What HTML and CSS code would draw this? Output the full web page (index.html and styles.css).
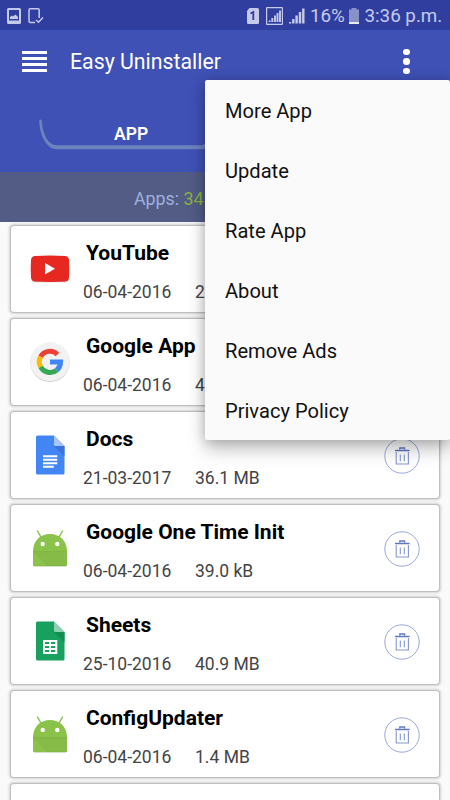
FILE: index.html
```
<!DOCTYPE html>
<html lang="en">
<head>
  <meta charset="utf-8">
  <title>Easy Uninstaller</title>
  <link rel="stylesheet" href="styles.css">
</head>
<body>
  <!-- Shared icons -->
  <svg class="icon-defs" width="0" height="0">
    <symbol id="trash" viewBox="0 0 36 36">
      <circle cx="18" cy="18" r="17.2" fill="none" stroke="#8092d0" stroke-width="0.8" />
      <path d="M11 12.5h14.600M15.800 11.500v-1.500h4.800v1.500" fill="none" stroke="#6078c0" stroke-width="1.300" />
      <path d="M12.200 14v12h12.200V14M16.300 16.500v6.800M20.300 16.500v6.800" fill="none" stroke="#8496d0" stroke-width="1.100" />
    </symbol>
    <symbol id="android" viewBox="0 0 40 40">
      <path d="M7.500 3l4 7M32.500 3l-4 7" stroke="#8bc34a" stroke-width="1.500" stroke-linecap="round" />
      <path d="M3 37V22.500C3.300 12.500 10.500 6 20 6S36.700 12.500 37 22.500V37q0 1-1 1H4q-1 0-1-1z" fill="#8bc34a" />
      <path d="M3 24l14 14H4q-1 0-1-1z" fill="#8bc34a" />
      <path d="M3 24l14 14h19q1 0 1-1V24z" fill="#86bb47" />
      <path d="M3 23.700h34" stroke="#79ad41" stroke-width="0.7" />
      <path d="M4 38.200h32" stroke="#7ba350" stroke-width="0.500" />
      <circle cx="12.700" cy="16" r="2.200" fill="#fff" />
      <circle cx="27.300" cy="16" r="2.200" fill="#fff" />
    </symbol>
  </svg>

  <div class="status-bar">
    <div class="status-left">
      <svg width="14" height="16" viewBox="0 0 14 16">
        <path d="M1.500 0h11q1.500 0 1.500 1.500v13q0 1.500-1.500 1.500h-11Q0 16 0 14.500v-13Q0 0 1.500 0zM2 2v10.500h10V2z" fill="#c5cae9" fill-rule="evenodd" />
        <path d="M3 11V9l2-1.500 1 1L8.500 6.500 11 9v2z" fill="#c5cae9" />
      </svg>
      <svg width="16" height="16" viewBox="0 0 16 16">
        <path d="M11.200 10V2q0-1.200-1.200-1.200H2.200Q1 .8 1 2v11q0 1.500 1.200 1.500H7" fill="none" stroke="#c5cae9" stroke-width="1.500" />
        <path d="M8 12l2.500 2.300L15 9.500" fill="none" stroke="#c5cae9" stroke-width="1.500" />
      </svg>
    </div>
    <div class="status-right">
      <svg class="sim" width="13" height="16" viewBox="0 0 13 16">
        <path d="M3.500 0h8Q13 0 13 1.500v13q0 1.500-1.500 1.500h-9Q1 16 1 14.500V3z" fill="#c5cae9" />
        <path d="M4.500 5.500L7.300 4v8" fill="none" stroke="#303f9f" stroke-width="1.800" />
      </svg>
      <svg class="boxed-signal" width="17" height="18" viewBox="0 0 17 18">
        <rect x="0.600" y="0.600" width="15.800" height="16.800" rx="0.500" fill="none" stroke="#c5cae9" stroke-width="1.200" />
        <path d="M3.700 15v-1.500M6.300 15v-4M9 15V8.500M11.500 15V6M14 15V3.500" stroke="#c5cae9" stroke-width="1.900" />
      </svg>
      <svg class="signal" width="16" height="16" viewBox="0 0 16 16">
        <path d="M1 15.500v-1.500M4.300 15.500v-4.500M7.600 15.500V7.500M11 15.500V4M14.300 15.500V.5" stroke="#c5cae9" stroke-width="2.400" />
      </svg>
      <span class="percent">16%</span>
      <svg class="battery" width="10" height="16" viewBox="0 0 10 16">
        <path d="M2.500 0h5v1.500H10V16H0V1.500h2.500z" fill="#8990c8" />
        <path d="M0 14h10v2H0z" fill="#e8eaf6" />
      </svg>
      <span class="clock">3:36 p.m.</span>
    </div>
  </div>

  <div class="header">
    <div class="toolbar">
      <div class="hamburger"><i></i><i></i><i></i><i></i></div>
      <h1>Easy Uninstaller</h1>
      <div class="more"><i></i><i></i><i></i></div>
    </div>
    <div class="tab">
      <svg width="185" height="34" viewBox="0 0 185 34">
        <path d="M.2 1.500Q1.500-.5 2.800 1.500C3.500 14 8.500 26.200 18 26.200h143q4 0 7-3l2 4q-3 3-8 3H18C7 30.200.5 15.500.2 1.500z" fill="#6c84be" />
      </svg>
      <span>APP</span>
    </div>
  </div>

  <div class="count-bar">Apps: <b>34</b></div>

  <div class="list">
    <div class="card">
      <svg class="app-icon" width="40" height="40" viewBox="0 0 40 40">
        <rect x="1.200" y="8" width="37.600" height="25.300" rx="4" fill="#c9c0c0" />
        <path d="M5 7q15-.8 30 0 3.700.3 4 4 .6 9 0 17.500-.3 3.500-4 4-15 .8-30 0-3.500-.4-4-4-.6-9 0-17.500Q1.400 7.300 5 7z" fill="#e62820" />
        <path d="M15 14v11.500l10-5.700z" fill="#fff" />
      </svg>
      <div class="info">
        <h2>YouTube</h2>
        <p><span>06-04-2016</span><span>2</span></p>
      </div>
      <svg class="trash"><use href="#trash" /></svg>
    </div>
    <div class="card">
      <svg class="app-icon" width="40" height="40" viewBox="0 0 40 40">
        <circle cx="20" cy="20.300" r="19.600" fill="#c8c8c8" />
        <circle cx="20" cy="19.700" r="19.500" fill="#f2f2f2" />
        <g fill="none" stroke-width="5">
          <path d="M10.600 14.800A10.600 10.600 0 0 1 27.500 12.500" stroke="#ea4335" />
          <path d="M10.600 24.900A10.600 10.600 0 0 1 10.600 14.800" stroke="#fbbc05" />
          <path d="M26.600 28.200A10.600 10.600 0 0 1 10.600 24.900" stroke="#34a853" />
          <path d="M20 20h10.600A10.600 10.600 0 0 1 26.600 28.200" stroke="#4285f4" />
        </g>
      </svg>
      <div class="info">
        <h2>Google App</h2>
        <p><span>06-04-2016</span><span>4</span></p>
      </div>
      <svg class="trash"><use href="#trash" /></svg>
    </div>
    <div class="card">
      <svg class="app-icon" width="40" height="40" viewBox="0 0 40 40">
        <path d="M7.500.5H24L34.500 11v27q0 1.500-1.500 1.500H7.500Q6 39.500 6 38V2Q6 .5 7.500.5z" fill="#4285f4" />
        <path d="M24 11h10.500v10.500z" fill="#3b74d8" />
        <path d="M24 .5L34.500 11H25.500q-1.500 0-1.500-1.500z" fill="#a6c5fa" />
        <path d="M13 21.200h14.300M13 24.700h14.300M13 28.200h14.300M13 31.800h10.800" stroke="#fff" stroke-width="1.900" />
      </svg>
      <div class="info">
        <h2>Docs</h2>
        <p><span>21-03-2017</span><span>36.1 MB</span></p>
      </div>
      <svg class="trash"><use href="#trash" /></svg>
    </div>
    <div class="card">
      <svg class="app-icon" width="40" height="40"><use href="#android" /></svg>
      <div class="info">
        <h2>Google One Time Init</h2>
        <p><span>06-04-2016</span><span>39.0 kB</span></p>
      </div>
      <svg class="trash"><use href="#trash" /></svg>
    </div>
    <div class="card">
      <svg class="app-icon" width="40" height="40" viewBox="0 0 40 40">
        <path d="M7.500.5H24L34.500 11v27q0 1.500-1.500 1.500H7.500Q6 39.500 6 38V2Q6 .5 7.500.5z" fill="#17a05e" />
        <path d="M24 11h10.500v10.500z" fill="#148d53" />
        <path d="M24 .5L34.500 11H25.500q-1.500 0-1.500-1.500z" fill="#8ed1b1" />
        <path d="M13 19h14.300v14H13zM15 21v2h4.300v-2zM21 21v2h4.300v-2zM15 25v2h4.300v-2zM21 25v2h4.300v-2zM15 29v2h4.300v-2zM21 29v2h4.300v-2z" fill="#fff" fill-rule="evenodd" />
      </svg>
      <div class="info">
        <h2>Sheets</h2>
        <p><span>25-10-2016</span><span>40.9 MB</span></p>
      </div>
      <svg class="trash"><use href="#trash" /></svg>
    </div>
    <div class="card">
      <svg class="app-icon" width="40" height="40"><use href="#android" /></svg>
      <div class="info">
        <h2>ConfigUpdater</h2>
        <p><span>06-04-2016</span><span>1.4 MB</span></p>
      </div>
      <svg class="trash"><use href="#trash" /></svg>
    </div>
    <div class="card card-last"></div>
  </div>

  <ul class="menu">
    <li>More App</li>
    <li>Update</li>
    <li>Rate App</li>
    <li>About</li>
    <li>Remove Ads</li>
    <li>Privacy Policy</li>
  </ul>
</body>
</html>
```
FILE: styles.css
```
* {
  box-sizing: border-box;
}
body {
  margin: 0;
  height: 800px;
  position: relative;
  overflow: hidden;
  background-color: #fafafa;
  font-family: Roboto, sans-serif;
}
h1, h2, p, ul {
  margin: 0;
  padding: 0;
}
.icon-defs {
  position: absolute;
}
.status-bar {
  display: flex;
  justify-content: space-between;
  align-items: center;
  height: 30px;
  padding: 1px 8px 0 7px;
  background-color: #303f9f;
  color: #c5cae9;
}
.status-left,
.status-right {
  display: flex;
  align-items: center;
}
.status-left {
  gap: 7px;
}
.status-right {
  font-size: 18.800px;
  white-space: nowrap;
}
.sim {
  margin-right: 7px;
}
.boxed-signal {
  margin-right: 6px;
}
.signal {
  margin-right: 6px;
}
.percent {
  width: 34px;
  margin-right: 4px;
  text-indent: -1px;
}
.battery {
  margin-right: 6px;
}
.clock {
  width: 77px;
  text-indent: -0.500px;
}
.header {
  height: 142px;
  background-color: #3f51b5;
}
.toolbar {
  display: flex;
  align-items: center;
  height: 63px;
  padding: 0 40.500px 0 22px;
}
.toolbar h1 {
  flex: 1;
  margin: 1px 0 0 23px;
  color: #fff;
  font-size: 21.300px;
  font-weight: 400;
  line-height: 24px;
}
.hamburger {
  display: flex;
  flex-direction: column;
  gap: 3.200px;
  width: 25px;
}
.hamburger i {
  height: 3.100px;
  background-color: #fff;
}
.more {
  display: flex;
  flex-direction: column;
  gap: 2.800px;
}
.more i {
  width: 6.600px;
  height: 6.600px;
  border-radius: 50%;
  background-color: #fff;
}
.tab {
  display: grid;
  width: 185px;
  margin: 26px 0 0 39px;
}
.tab svg,
.tab span {
  grid-area: 1 / 1;
}
.tab span {
  padding: 5px 0 0 75px;
  color: #fff;
  font-size: 17.500px;
  font-weight: 600;
  line-height: 20px;
}
.count-bar {
  height: 50px;
  padding: 2px 0 0 134px;
  background-color: #525c85;
  color: #9fb0de;
  font-size: 17.800px;
  line-height: 50px;
}
.count-bar b {
  color: #8bb043;
  font-weight: 400;
}
.list {
  display: flex;
  flex-direction: column;
  gap: 7px;
  height: 578px;
  padding: 4px 11px 0 11px;
  overflow: hidden;
}
.card {
  display: flex;
  flex-shrink: 0;
  height: 86px;
  padding-left: 19px;
  border-radius: 3px;
  background-color: #fff;
  box-shadow: 0 0 2px 1px rgba(0, 0, 0, 0.28), 0 0 0 3.500px #f0f0f0;
}
.card-last {
  height: 16px;
  border-radius: 3px 3px 0 0;
}
.app-icon {
  margin-top: 23px;
}
.info {
  flex: 1;
  padding: 15px 0 0 13px;
}
.info h2 {
  padding-left: 3px;
  color: #000;
  font-size: 21px;
  font-weight: 700;
  line-height: 24px;
}
.info p {
  display: flex;
  margin-top: 16.500px;
  color: #444;
  font-size: 17.500px;
  line-height: 20px;
}
.info p span:first-child {
  width: 112px;
}
.trash {
  width: 36px;
  height: 36px;
  margin: 25.500px 19px 0 0;
}
.menu {
  position: absolute;
  top: 80px;
  left: 205px;
  width: 245px;
  border-radius: 2px;
  background-color: #fafafa;
  box-shadow: 0 9px 18px rgba(0, 0, 0, 0.26), 0 0 12px rgba(0, 0, 0, 0.16);
  list-style: none;
}
.menu li {
  height: 60px;
  padding-left: 20px;
  color: #111;
  font-size: 20.100px;
  line-height: 62px;
}
```
